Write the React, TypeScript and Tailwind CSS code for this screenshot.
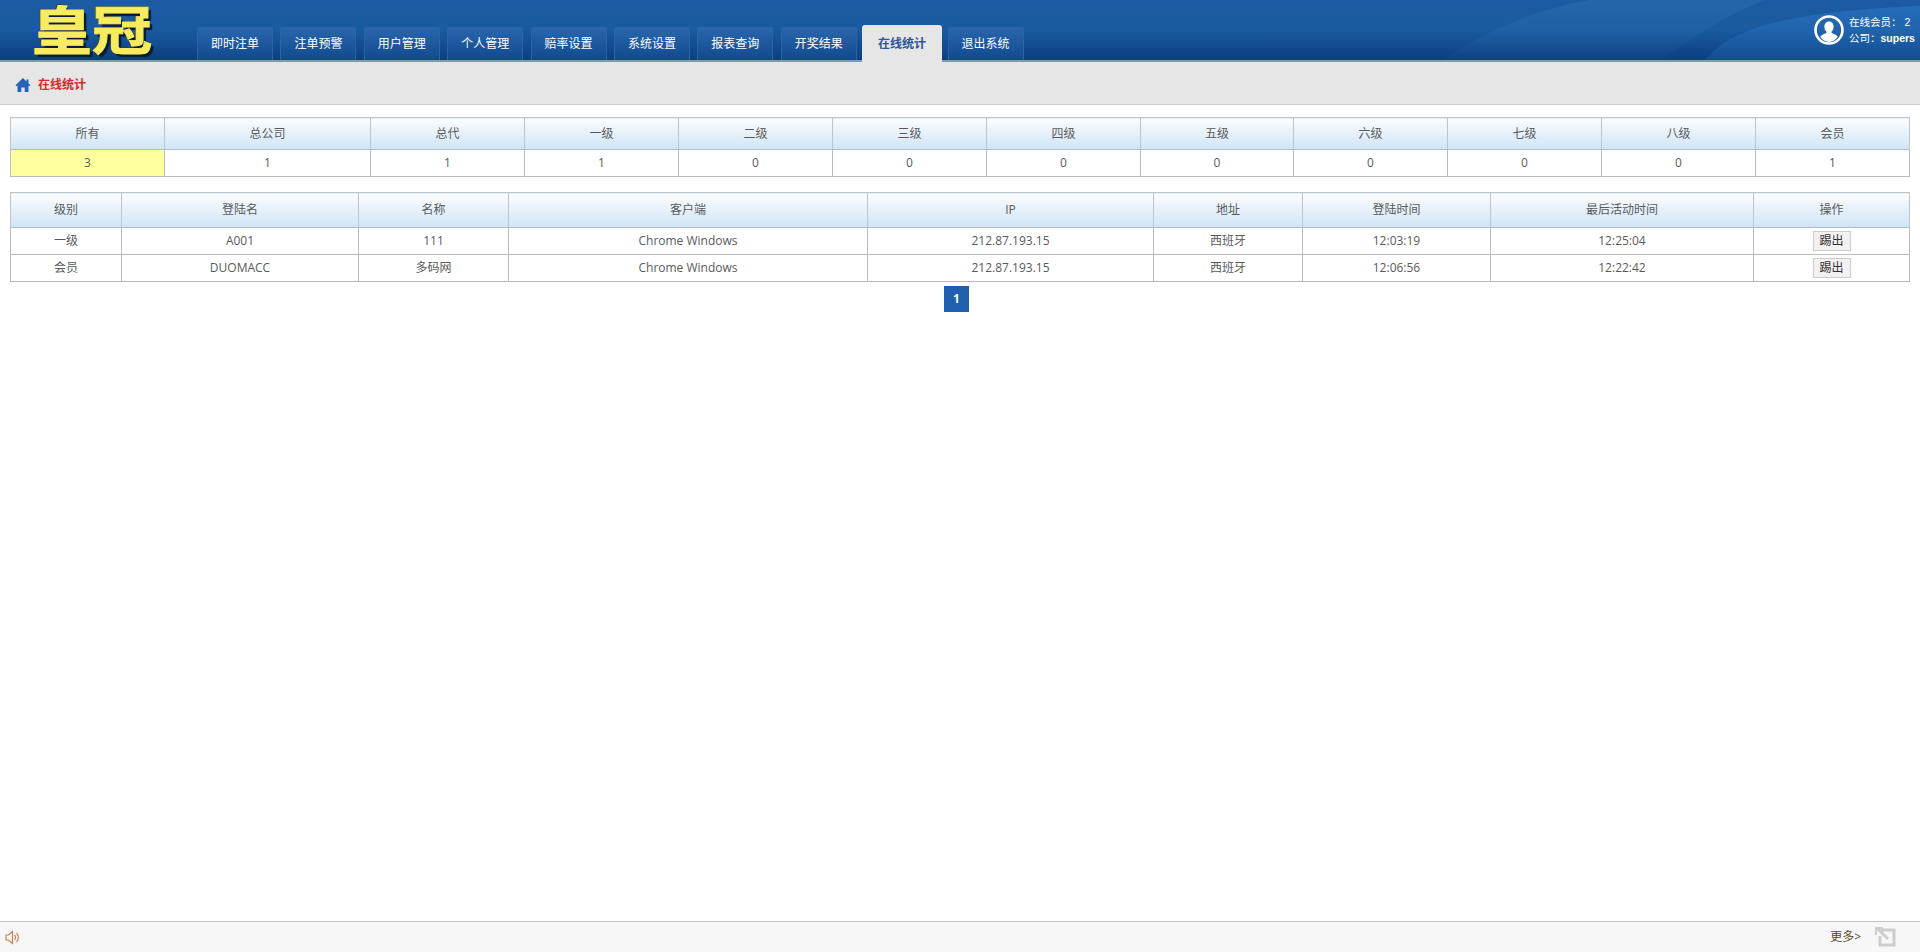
const tabs = ["即时注单", "注单预警", "用户管理", "个人管理", "赔率设置", "系统设置", "报表查询", "开奖结果", "在线统计", "退出系统"];

const statCols = ["w-[154px]", "w-[206px]", "w-[154px]", "w-[154px]", "w-[154px]", "w-[154px]", "w-[154px]", "w-[153px]", "w-[154px]", "w-[154px]", "w-[154px]", "w-[154px]"];
const statHead = ["所有", "总公司", "总代", "一级", "二级", "三级", "四级", "五级", "六级", "七级", "八级", "会员"];
const statVals = ["3", "1", "1", "1", "0", "0", "0", "0", "0", "0", "0", "1"];

const userCols = ["w-[111px]", "w-[237px]", "w-[150px]", "w-[359px]", "w-[286px]", "w-[149px]", "w-[188px]", "w-[263px]", "w-[156px]"];
const userHead = ["级别", "登陆名", "名称", "客户端", "IP", "地址", "登陆时间", "最后活动时间", "操作"];
const users = [
  ["一级", "A001", "111", "Chrome Windows", "212.87.193.15", "西班牙", "12:03:19", "12:25:04"],
  ["会员", "DUOMACC", "多码网", "Chrome Windows", "212.87.193.15", "西班牙", "12:06:56", "12:22:42"],
];

const thCls = "border border-[#bcc5cc] border-b-[#a9bfd2] bg-gradient-to-b from-[#fbfdfe] to-[#cfe4f6] font-normal text-[#5a5a5a]";
const tdCls = "h-[27px] border border-[#bbbbbb] text-center text-[#5a5a5a]";

export default function App() {
  return (
    <div className="flex h-[952px] flex-col overflow-hidden bg-white font-['Open_Sans','Noto_Sans_CJK_SC',sans-serif] text-[12px]">
      {/* top bar */}
      <div className="relative flex h-[62px] shrink-0 items-end border-b-2 border-[#7f98ba] bg-gradient-to-b from-[#1c5ba3] via-[#1a5a9f] to-[#0c3f80]">
        <svg className="absolute right-0 top-0 h-[60px] w-[480px]" viewBox="0 0 480 60">
          <defs>
            <linearGradient id="sw1" x1="0" y1="0" x2="0" y2="1">
              <stop offset="0" stopColor="#3a7cc0" stopOpacity="0.3" />
              <stop offset="1" stopColor="#3a7cc0" stopOpacity="0.04" />
            </linearGradient>
            <linearGradient id="sw2" x1="0" y1="0" x2="0" y2="1">
              <stop offset="0" stopColor="#2f78c4" stopOpacity="0.6" />
              <stop offset="1" stopColor="#1c62b0" stopOpacity="0.4" />
            </linearGradient>
          </defs>
          <path d="M3 60C40 35 90 10 150 0H325C285 15 250 40 220 60Z" fill="url(#sw1)" />
          <path d="M265 60C290 30 340 12 480 6V60Z" fill="url(#sw2)" />
        </svg>
        <div className="relative h-[60px] w-[197px] shrink-0 pl-[32px] pt-[1px]">
          <div className="origin-top scale-y-[0.88] font-['Noto_Sans_CJK_SC',sans-serif] text-[60px] font-bold leading-[60px] text-[#f7ec5e] [-webkit-text-stroke:1px_#f7ec5e] [text-shadow:3px_3px_1px_#0a1c33,-1px_-1px_0_#3a3a20]">
            皇冠
          </div>
        </div>
        <div className="relative flex items-end gap-[7.4px]">
          {tabs.map((label) =>
            label === "在线统计" ? (
              <div key={label} className="-mb-[2px] -mx-[2px] flex h-[37px] w-[80px] items-center justify-center rounded-t-[3px] bg-[#e6e6e6] font-bold text-[#2f5596]">
                {label}
              </div>
            ) : (
              <div key={label} className="flex h-[33px] w-[76px] items-center justify-center rounded-t-[2px] border border-b-0 border-[#2a64a6] bg-gradient-to-b from-[#2a66ac] to-[#0f4a8f] text-white">
                {label}
              </div>
            )
          )}
        </div>
        <div className="relative ml-auto mb-[14px] flex items-center gap-[5px] pr-[5px] font-['Liberation_Sans','Noto_Sans_CJK_SC',sans-serif] text-[10.5px] leading-[16px] text-white">
          <svg className="h-[30px] w-[30px]" viewBox="0 0 30 30">
            <circle cx="15" cy="15" r="13.5" fill="none" stroke="#fff" strokeWidth="2.6" />
            <path d="M15 6.5c-3 0-4.6 2.3-4.6 5.2 0 2 .8 3.8 2 4.8v1.6c-2.3 1-5 2-6.2 3.6A12 12 0 0 0 15 27a12 12 0 0 0 8.800-5.300c-1.200-1.600-3.900-2.600-6.200-3.600v-1.600c1.200-1 2-2.800 2-4.800 0-2.900-1.600-5.200-4.600-5.200z" fill="#fff" />
          </svg>
          <div className="flex w-[66px] flex-col whitespace-nowrap">
            <span>在线会员：&nbsp;2</span>
            <span>
              公司：<b>supers</b>
            </span>
          </div>
        </div>
      </div>

      {/* crumb */}
      <div className="flex h-[43px] shrink-0 items-center gap-[7px] border-b border-[#cccccc] bg-[#e6e6e6] pl-[15px] pt-[3px] font-bold text-[#d42a2a]">
        <svg className="h-[16px] w-[16px]" viewBox="0 0 16 16" fill="#2563b8">
          <path d="M8 1 .5 8.200 1.600 9.300 2.500 8.500V15H6.300V10.500H9.700V15H13.500V8.500L14.400 9.300 15.500 8.200 13.500 6.300V2.500H11.500V4.400Z" />
        </svg>
        在线统计
      </div>

      {/* content */}
      <div className="flex-1 px-[10px] pt-[12px]">
        <table className="w-[1899px] table-fixed border-collapse">
          <colgroup>
            {statCols.map((c, i) => (
              <col key={i} className={c} />
            ))}
          </colgroup>
          <thead>
            <tr>
              {statHead.map((h) => (
                <th key={h} className={`h-[32px] ${thCls}`}>
                  {h}
                </th>
              ))}
            </tr>
          </thead>
          <tbody>
            <tr>
              {statVals.map((v, i) => (
                <td key={i} className={i === 0 ? `${tdCls} bg-[#ffffa0]` : tdCls}>
                  {v}
                </td>
              ))}
            </tr>
          </tbody>
        </table>

        <table className="mt-[15px] w-[1899px] table-fixed border-collapse">
          <colgroup>
            {userCols.map((c, i) => (
              <col key={i} className={c} />
            ))}
          </colgroup>
          <thead>
            <tr>
              {userHead.map((h) => (
                <th key={h} className={`h-[35px] ${thCls}`}>
                  {h}
                </th>
              ))}
            </tr>
          </thead>
          <tbody>
            {users.map((u) => (
              <tr key={u[1]}>
                {u.map((v, i) => (
                  <td key={i} className={tdCls}>
                    {v}
                  </td>
                ))}
                <td className={tdCls}>
                  <button className="h-[20px] w-[38px] border border-[#cccccc] bg-[#f2f2f2] align-middle text-[12px] text-[#333]">踢出</button>
                </td>
              </tr>
            ))}
          </tbody>
        </table>

        <div className="mt-[4px] flex justify-center pr-[7px]">
          <div className="flex h-[26px] w-[25px] items-center justify-center bg-[#1f60ae] font-bold text-white">1</div>
        </div>
      </div>

      {/* footer */}
      <div className="flex h-[31px] shrink-0 items-center justify-between border-t border-[#c4c4c4] bg-[#f7f7f7] pl-[5px] pr-[24px]">
        <svg className="h-[17px] w-[16px]" viewBox="0 0 16 16" fill="none" stroke="#cf7a4c" strokeWidth="1.100">
          <path d="M1 5.500H3.500L7.500 2V14L3.500 10.500H1Z" />
          <path d="M9.500 5.500a3.500 3.500 0 0 1 0 5" />
          <path d="M11.500 3.500a6.500 6.500 0 0 1 0 9" />
        </svg>
        <div className="flex items-center gap-[14px] text-[#5a4a2a]">
          <span>更多&gt;</span>
          <svg className="h-[20px] w-[21px]" viewBox="0 0 21 20" fill="none" stroke="#cdcdcd" strokeWidth="3">
            <path d="M6 3H19V18H5V9" />
            <path d="M2 1 13 12" />
            <path d="M1 8V1H8" strokeWidth="2" />
          </svg>
        </div>
      </div>
    </div>
  );
}
